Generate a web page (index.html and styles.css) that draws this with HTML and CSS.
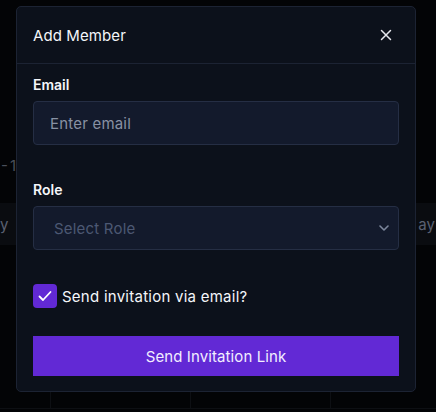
FILE: index.html
```html
<!DOCTYPE html>
<html>
<head>
<meta charset="utf-8">
<link rel="stylesheet" href="styles.css">
</head>
<body>
<div class="page">
  <div class="bg-range">- 1</div>
  <div class="bg-row"><span>y</span><span>ay</span></div>
  <div class="bg-grid">
    <div class="cell c1"></div><div class="cell c2"></div><div class="cell c3"></div><div class="cell c4"></div>
  </div>
</div>
<div class="modal">
  <div class="modal-header">
    <span class="title">Add Member</span>
    <svg class="close" width="12" height="12" viewBox="0 0 12 12"><path d="M1.5 1.5 L10.5 10.5 M10.5 1.5 L1.5 10.5" stroke="#e6e8ee" stroke-width="1.5" stroke-linecap="round"/></svg>
  </div>
  <div class="modal-body">
    <label class="label">Email</label>
    <div class="input"><span class="placeholder">Enter email</span></div>
    <label class="label role-label">Role</label>
    <div class="input select"><span class="select-text">Select Role</span>
      <svg width="10" height="6" viewBox="0 0 10 6"><path d="M1 1 L5 5 L9 1" stroke="#7c879c" stroke-width="1.6" fill="none" stroke-linecap="round" stroke-linejoin="round"/></svg>
    </div>
    <div class="check-row">
      <span class="checkbox"><svg width="16" height="16" viewBox="0 0 16 16"><path d="M2.5 8.5 L6 12 L13.5 4" stroke="#ffffff" stroke-width="1.8" fill="none" stroke-linecap="round" stroke-linejoin="round"/></svg></span>
      <span class="check-text">Send invitation via email?</span>
    </div>
    <button class="btn">Send Invitation Link</button>
  </div>
</div>
</body>
</html>
```
FILE: styles.css
```css
html, body {
  margin: 0;
  padding: 0;
  background: #030406;
  font-family: Inter, "Noto Sans", sans-serif;
  width: 436px;
  height: 412px;
  overflow: hidden;
}
.page {
  position: relative;
  width: 436px;
  height: 412px;
}
.bg-range {
  padding-top: 156px;
  height: 203px;
  line-height: 20px;
  box-sizing: border-box;
  color: #4a4f5a;
  font-size: 15px;
  padding-left: 1px;
  word-spacing: -2px;
}
.bg-row {
  height: 42px;
  background: #0a0c10;
  display: flex;
  justify-content: space-between;
  align-items: center;
  color: #5a6070;
  font-size: 15px;
  padding: 0 1px 0 0;
}
.bg-grid {
  margin-top: 147px;
  height: 20px;
  display: flex;
}
.cell { border-right: 1px solid #0d0f13; border-bottom: 1px solid #0d0f13; height: 16px; }
.c1 { width: 50px; }
.c2 { width: 139px; }
.c3 { width: 139px; }
.c4 { flex: 1; border-right: none; }
.modal {
  position: absolute;
  left: 16px;
  top: 6px;
  width: 400px;
  box-sizing: border-box;
  background: #0c111b;
  border: 1px solid #1c2333;
  border-radius: 5px;
}
.modal-header {
  height: 56px;
  display: flex;
  align-items: center;
  justify-content: space-between;
  padding: 0 23px 0 16px;
  border-bottom: 1px solid #1c2333;
}
.title {
  color: #f4f6fa;
  font-size: 15px;
  font-weight: 400;
  letter-spacing: 0.1px;
}
.modal-body {
  padding: 11px 16px 15px 16px;
  display: flex;
  flex-direction: column;
}
.label {
  color: #f4f6fa;
  font-size: 14px;
  font-weight: 600;
  line-height: 20px;
  margin-bottom: 6px;
}
.role-label { margin-top: 35px; }
.input {
  height: 44px;
  box-sizing: border-box;
  background: #131a2c;
  border: 1px solid #252e44;
  border-radius: 4px;
  display: flex;
  align-items: center;
  padding: 0 16px;
}
.placeholder {
  color: #8891a3;
  font-size: 15px;
  letter-spacing: 0.2px;
}
.select {
  justify-content: space-between;
  padding: 0 9px 0 20px;
}
.select-text {
  color: #4c5873;
  font-size: 15px;
  letter-spacing: 0.2px;
}
.check-row {
  margin-top: 34px;
  display: flex;
  align-items: center;
  gap: 5px;
}
.checkbox {
  width: 24px;
  height: 24px;
  border-radius: 4px;
  background: #6229d5;
  display: flex;
  align-items: center;
  justify-content: center;
}
.check-text {
  color: #f4f6fa;
  font-size: 15px;
  letter-spacing: 0.25px;
}
.btn {
  margin-top: 28px;
  height: 40px;
  border: none;
  background: #6229d5;
  color: #f2eeff;
  font-family: Inter, "Noto Sans", sans-serif;
  font-size: 15px;
  font-weight: 400;
  letter-spacing: 0.1px;
  cursor: pointer;
}
```
